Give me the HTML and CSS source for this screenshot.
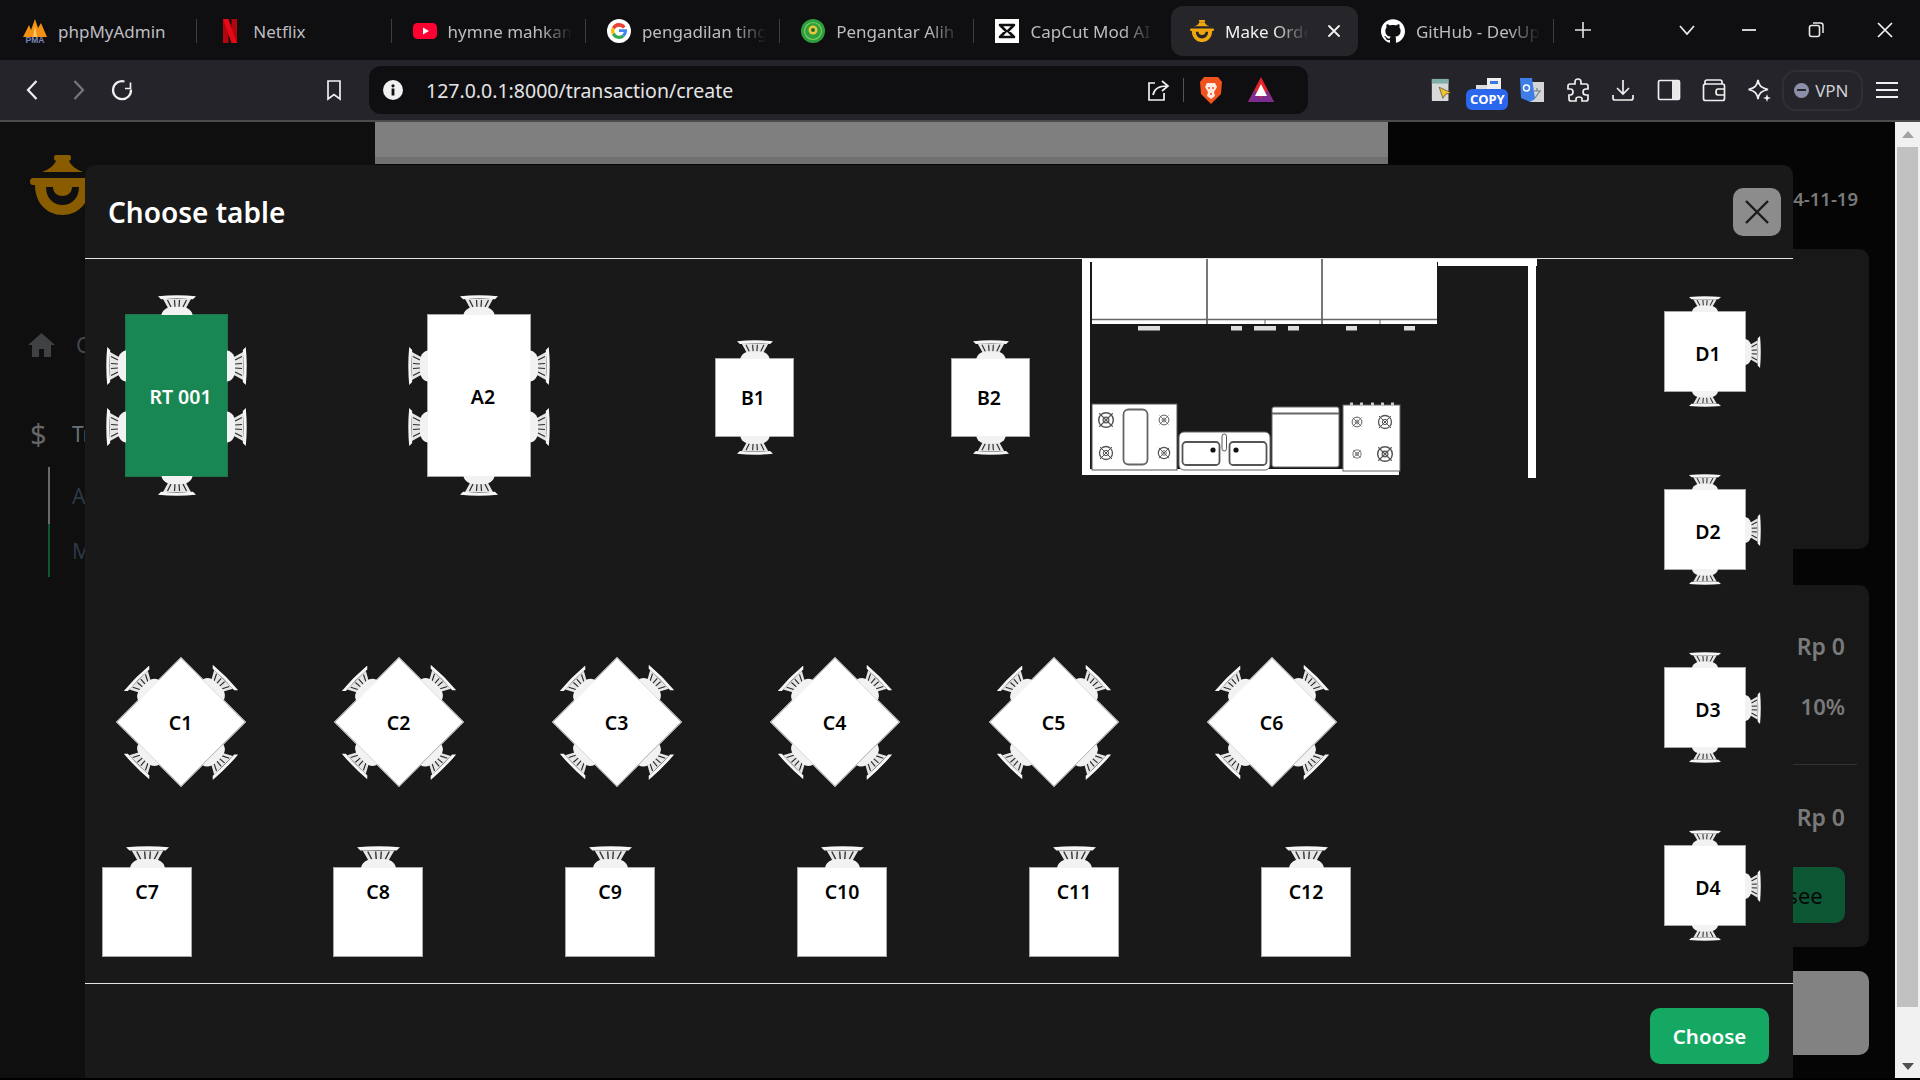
FILE: index.html
```html
<!DOCTYPE html>
<html lang="en">
<head>
<meta charset="utf-8">
<title>Make Order</title>
<link rel="stylesheet" href="styles.css">
</head>
<body>
<svg class="defs" aria-hidden="true">
  <symbol id="chair" viewBox="0 0 38 20" preserveAspectRatio="none">
    <path d="M0 1.2Q19-.6 38 1.2L35 4.2Q19 3 3 4.2Z" fill="#f6f6f6"/>
    <path d="M5 4L10 13H28L33 4Z" fill="#e6e6e6"/>
    <path d="M9.500 5L13 12M16.500 5L17 12M21.500 5L21 12M28.500 5L25 12" stroke="#2b2b2b" stroke-width="1.200"/>
    <path d="M3.500 20Q4 15 10 12.500Q19 11 28 12.500Q34 15 34.500 20Z" fill="#f2f2f2"/>
  </symbol>
  <symbol id="burner" viewBox="0 0 16 16">
    <circle cx="8" cy="8" r="6.500" fill="none" stroke="#555" stroke-width="1.300"/>
    <circle cx="8" cy="8" r="2.600" fill="none" stroke="#555"/>
    <path d="M2 2L14 14M14 2L2 14" stroke="#555" stroke-width="1"/>
  </symbol>
  <symbol id="logo" viewBox="0 0 65 60">
    <path d="M26 0H39Q41 0 41 3T38 6H27Q24 6 24 3T26 0Z" fill="currentColor"/>
    <path d="M26 6H39Q42 13 53 17H12Q23 13 26 6Z" fill="currentColor"/>
    <path d="M3 23H62Q65 23 65 26.500T62 30H60C60 48 48 60 32.500 60C17 60 5 48 5 30H3Q0 30 0 26.500T3 23Z" fill="currentColor"/>
    <path d="M16 32H23C23 44 42 44 42 32H49C49 56 16 56 16 32Z" class="logo-cut"/>
  </symbol>
</svg>

<header class="tabstrip">
  <div class="tab tab-sep tab-first">
    <svg class="favicon" viewBox="0 0 24 24"><path d="M0 18L6 6L8 11L12 0L15 9L18 4L24 18Z" fill="#f29111"/><path d="M10 18L12 6L14 18Z" fill="#ffc46b"/><text x="12" y="24" class="pma">PMA</text></svg>
    <span class="tab-title">phpMyAdmin</span>
  </div>
  <div class="tab tab-sep">
    <svg class="favicon" viewBox="0 0 24 24"><path d="M5 0H10.500V24L5 24Z" fill="#b1060f"/><path d="M13.500 0H19V24H13.500Z" fill="#b1060f"/><path d="M5 0H10.500L19 24H13.500Z" fill="#e50914"/></svg>
    <span class="tab-title">Netflix</span>
  </div>
  <div class="tab tab-sep">
    <svg class="favicon" viewBox="0 0 24 24"><rect y="4" width="24" height="16" rx="4.500" fill="#ff0033"/><path d="M10 8.500L16 12L10 15.500Z" fill="#fff"/></svg>
    <span class="tab-title fade">hymne mahkamah agung</span>
  </div>
  <div class="tab tab-sep">
    <svg class="favicon" viewBox="0 0 24 24"><circle cx="12" cy="12" r="12" fill="#fff"/><path d="M18.500 7.400A8 8 0 0 0 5 8.200L7.700 10.300A5 5 0 0 1 16 9.600Z" fill="#ea4335"/><path d="M5 8.200A8 8 0 0 0 5 15.800L7.700 13.700A5 5 0 0 1 7.700 10.300Z" fill="#fbbc05"/><path d="M5 15.800A8 8 0 0 0 17.500 17.800L15 15.800A5 5 0 0 1 7.700 13.700Z" fill="#34a853"/><path d="M12 10.300H20V12A8 8 0 0 1 17.500 17.800L15 15.800A5 5 0 0 0 16.800 13H12Z" fill="#4285f4"/></svg>
    <span class="tab-title fade">pengadilan tinggi agama</span>
  </div>
  <div class="tab tab-sep">
    <svg class="favicon" viewBox="0 0 24 24"><circle cx="12" cy="12" r="12" fill="#2f9e3f"/><circle cx="12" cy="12" r="8.500" fill="none" stroke="#7fcf5d" stroke-width="1.200"/><circle cx="12" cy="11" r="4.500" fill="#e7c93a"/><circle cx="12" cy="11" r="2" fill="#1f6f2e"/></svg>
    <span class="tab-title fade">Pengantar Alih Daya</span>
  </div>
  <div class="tab">
    <svg class="favicon" viewBox="0 0 24 24"><rect width="24" height="24" fill="#fff"/><path d="M5 6H19L13 12L19 18H5L11 12Z" fill="none" stroke="#111" stroke-width="2.600" stroke-linejoin="round"/></svg>
    <span class="tab-title fade">CapCut Mod AI Pro</span>
  </div>
  <div class="tab tab-active">
    <svg class="favicon logo-tab" viewBox="0 0 65 60"><use href="#logo"/></svg>
    <span class="tab-title fade-short">Make Order</span>
    <svg class="tab-close" viewBox="0 0 12 12"><path d="M1 1L11 11M11 1L1 11" stroke="#f2f2f2" stroke-width="1.800" stroke-linecap="round"/></svg>
  </div>
  <div class="tab tab-sep tab-last">
    <svg class="favicon" viewBox="0 0 24 24"><path fill="#fff" d="M12 .297c-6.630 0-12 5.373-12 12 0 5.303 3.438 9.800 8.205 11.385.6.113.82-.258.82-.577 0-.285-.01-1.040-.015-2.040-3.338.724-4.042-1.610-4.042-1.610C4.422 18.070 3.633 17.700 3.633 17.700c-1.087-.744.084-.729.084-.729 1.205.084 1.838 1.236 1.838 1.236 1.070 1.835 2.809 1.305 3.495.998.108-.776.417-1.305.76-1.605-2.665-.3-5.466-1.332-5.466-5.930 0-1.310.465-2.380 1.235-3.220-.135-.303-.54-1.523.105-3.176 0 0 1.005-.322 3.300 1.230.96-.267 1.980-.399 3-.405 1.020.006 2.040.138 3 .405 2.280-1.552 3.285-1.230 3.285-1.230.645 1.653.24 2.873.12 3.176.765.84 1.230 1.910 1.230 3.220 0 4.610-2.805 5.625-5.475 5.920.42.36.81 1.096.81 2.220 0 1.606-.015 2.896-.015 3.286 0 .315.21.69.825.57C20.565 22.092 24 17.592 24 12.297c0-6.627-5.373-12-12-12"/></svg>
    <span class="tab-title fade">GitHub - DevUp Team</span>
  </div>
  <svg class="win-icon win-plus" viewBox="0 0 18 18"><path d="M9 1V17M1 9H17" stroke="#e4e4e4" stroke-width="1.600"/></svg>
  <svg class="win-icon win-chevron" viewBox="0 0 16 10"><path d="M1 1L8 9L15 1" fill="none" stroke="#e8e8e8" stroke-width="1.800"/></svg>
  <svg class="win-icon win-min" viewBox="0 0 16 16"><path d="M1 8H15" stroke="#e8e8e8" stroke-width="1.800"/></svg>
  <svg class="win-icon win-restore" viewBox="0 0 16 16"><rect x="1.500" y="3.500" width="10" height="11" rx="2" fill="none" stroke="#e8e8e8" stroke-width="1.600"/><path d="M5 1H12.500Q15 1 15 3.500V11" fill="none" stroke="#e8e8e8" stroke-width="1.500"/></svg>
  <svg class="win-icon win-close" viewBox="0 0 16 16"><path d="M1 1L15 15M15 1L1 15" stroke="#f2f2f2" stroke-width="1.700"/></svg>
</header>

<nav class="toolbar">
  <div class="slot"><svg class="ic" viewBox="0 0 24 24"><path d="M15.500 3L7 12L15.500 21" class="st"/></svg></div>
  <div class="slot"><svg class="ic" viewBox="0 0 24 24"><path d="M8.500 3L17 12L8.500 21" class="st dim"/></svg></div>
  <div class="slot"><svg class="ic" viewBox="0 0 24 24"><path d="M14.500 3.500A9 9 0 1 0 21 11.500" class="st"/><path d="M20.500 4.500V10.500H15" class="st thin"/></svg></div>
  <div class="slot slot-bookmark"><svg class="ic" viewBox="0 0 24 24"><path d="M6 3H18V21L12 16.500L6 21Z" class="st thin"/></svg></div>
  <div class="urlbar">
    <svg class="info" viewBox="0 0 20 20"><circle cx="10" cy="10" r="10" fill="#f1f1f1"/><rect x="8.600" y="8.500" width="2.800" height="7" fill="#111"/><circle cx="10" cy="5.800" r="1.600" fill="#111"/></svg>
    <span class="url">127.0.0.1:8000/transaction/create</span>
    <svg class="ic url-share" viewBox="0 0 24 24"><path d="M9 5H3V22H18V15" class="st thin"/><path d="M7 17C8 11 12 8 21 8M16 3L22 8L16 13" class="st thin"/></svg>
    <span class="url-sep"></span>
    <svg class="brave" viewBox="0 0 24 28"><path d="M5 1H19L23 6L22 18L12 28L2 18L1 6Z" fill="#f1521e"/><path d="M8 7H16L18 11L15 16L16 20L12 23L8 20L9 16L6 11Z" fill="#fff" opacity=".88"/><path d="M9 12H11M13 12H15M11 18H13" stroke="#f1521e" stroke-width="1.500"/></svg>
    <svg class="bat" viewBox="0 0 28 28"><path d="M14 1L27 26H1Z" fill="#e5232c"/><path d="M7.500 14L1 26H27L20.500 14L14 22Z" fill="#7d2d8f"/><path d="M14 8L20 20H8Z" fill="#fff"/></svg>
  </div>
  <div class="slot ext ext-first"><svg class="ic" viewBox="0 0 26 26"><rect x="2" y="1" width="18" height="24" rx="1" fill="#d8d8d8"/><rect x="2" y="1" width="18" height="5" fill="#7fb0a8"/><path d="M10 10L23 16L17 17.500L14 22Z" fill="#f2c230" stroke="#222" stroke-width=".6"/></svg></div>
  <div class="slot ext copy-ext">
    <svg class="copy-art" viewBox="0 0 42 14"><rect x="10" y="8" width="12" height="6" fill="#ddd"/><rect x="21" y="1" width="14" height="13" fill="#eee"/><rect x="24" y="4" width="8" height="3" fill="#3a78e0"/></svg>
    <span class="copy-badge">COPY</span>
  </div>
  <div class="slot ext"><svg class="ic" viewBox="0 0 24 24"><rect x="10" y="4" width="14" height="20" fill="#d5d5d5"/><path d="M0 0H12L15 21L10 24L1 20Z" fill="#3f7ee8"/><circle cx="6.500" cy="10" r="3" fill="none" stroke="#fff" stroke-width="1.400"/><path d="M17 10V13M14 13H21M15 20L20 13" stroke="#6f7f88" stroke-width="1.200" fill="none"/></svg></div>
  <div class="slot ext"><svg class="ic" viewBox="0 0 24 24"><path d="M9 4Q9 1 12 1T15 4V6H20Q22 6 22 8V11H20Q17 11 17 14T20 17H22V21Q22 23 20 23H16V21Q16 19 13 19T10 21V23H5Q3 23 3 21V17H4.500Q7 17 7 14T4.500 11H2V8Q2 6 4 6H9Z" class="st thin"/></svg></div>
  <div class="slot ext"><svg class="ic" viewBox="0 0 24 24"><path d="M12 2V15M6 10L12 16L18 10" class="st thin"/><path d="M2 17V20Q2 22 4 22H20Q22 22 22 20V17" class="st thin"/></svg></div>
  <div class="slot ext"><svg class="ic" viewBox="0 0 24 24"><rect x="1.500" y="2.500" width="21" height="19" rx="1.500" class="st thin"/><rect x="15" y="3" width="7" height="18" fill="#e8e8e8"/></svg></div>
  <div class="slot ext"><svg class="ic" viewBox="0 0 24 24"><path d="M3 7V4Q3 2 5 2H18Q20 2 20 4V6" class="st thin"/><rect x="1.500" y="6" width="21" height="16.500" rx="2" class="st thin"/><path d="M23 11H16Q14 11 14 14T16 17H23" class="st thin"/></svg></div>
  <div class="slot ext"><svg class="ic" viewBox="0 0 24 24"><path d="M11 2C12 8 14 10 21 11.500C14 13 12 15 11 21C10 15 8 13 1.500 11.500C8 10 10 8 11 2Z" class="st thin"/><path d="M20 16L21 19L24 20L21 21L20 24L19 21L16 20L19 19Z" fill="#eee"/></svg></div>
  <div class="vpn"><span class="vpn-dot"></span><span>VPN</span></div>
  <svg class="menu" viewBox="0 0 22 16"><path d="M0 1H22M0 8H22M0 15H22" stroke="#f0f0f0" stroke-width="2"/></svg>
</nav>

<div class="viewport">
  <aside class="sidebar">
    <svg class="side-logo" viewBox="0 0 65 60"><use href="#logo"/></svg>
    <div class="side-item side-home">
      <svg class="home-icon" viewBox="0 0 27 24"><path d="M13.500 0L27 12H23V24H16V16H11V24H4V12H0Z" fill="#3f4145"/></svg>
      <span class="side-label">Cashier</span>
    </div>
    <div class="side-item side-trans">
      <span class="dollar">$</span>
      <span class="side-label trans-label">Transaction</span>
    </div>
    <div class="sub-item sub-gray"><span>All</span></div>
    <div class="sub-item sub-green"><span>Make</span></div>
  </aside>

  <main class="main">
    <div class="topbar"></div>
    <div class="date">2024-11-19</div>
    <section class="card card-top"></section>
    <section class="card card-summary">
      <div class="sum-row">Rp 0</div>
      <div class="sum-row sum-tax">10%</div>
      <div class="sum-divider"></div>
      <div class="sum-row sum-total">Rp 0</div>
      <div class="sum-actions"><span class="pay-btn">Choosee</span></div>
    </section>
    <section class="card card-gray"></section>
  </main>

  <div class="scrollbar">
    <div class="sb-btn"><span class="arrow-up"></span></div>
    <div class="sb-thumb"></div>
    <div class="sb-rest"><span class="arrow-down"></span></div>
  </div>

  <div class="modal">
    <div class="modal-head">
      <h2 class="modal-title">Choose table</h2>
      <button class="modal-close" type="button"><svg viewBox="0 0 24 24"><path d="M1 1L23 23M23 1L1 23" stroke="#1a1a1a" stroke-width="2.400"/></svg></button>
    </div>
    <div class="floor">
      <div class="table wide at-rt selected shift-r">
        <svg class="chair n"><use href="#chair"/></svg><svg class="chair s"><use href="#chair"/></svg>
        <svg class="chair w y-a"><use href="#chair"/></svg><svg class="chair w y-b"><use href="#chair"/></svg>
        <svg class="chair e y-a"><use href="#chair"/></svg><svg class="chair e y-b"><use href="#chair"/></svg>
        <span>RT 001</span>
      </div>
      <div class="table wide at-a2 shift-r">
        <svg class="chair n"><use href="#chair"/></svg><svg class="chair s"><use href="#chair"/></svg>
        <svg class="chair w y-a"><use href="#chair"/></svg><svg class="chair w y-b"><use href="#chair"/></svg>
        <svg class="chair e y-a"><use href="#chair"/></svg><svg class="chair e y-b"><use href="#chair"/></svg>
        <span>A2</span>
      </div>
      <div class="table small at-b1"><svg class="chair n"><use href="#chair"/></svg><svg class="chair s"><use href="#chair"/></svg><span>B1</span></div>
      <div class="table small at-b2"><svg class="chair n"><use href="#chair"/></svg><svg class="chair s"><use href="#chair"/></svg><span>B2</span></div>

      <svg class="kitchen" viewBox="0 0 460 220">
        <rect width="8" height="216" fill="#fff"/>
        <rect x="8" width="348" height="3" fill="#fff"/>
        <rect x="10" width="345" height="65" fill="#fff"/>
        <path d="M125 0V65M240 0V65" stroke="#777" stroke-width="2"/>
        <path d="M10 60.500H355" stroke="#666" stroke-width="1.600"/>
        <path d="M183 60V65M298 60V65" stroke="#666"/>
        <g fill="#dcdcdc">
          <rect x="56" y="67" width="22" height="4.500"/><rect x="149" y="67" width="11" height="4.500"/><rect x="172" y="67" width="22" height="4.500"/>
          <rect x="206" y="67" width="11" height="4.500"/><rect x="264" y="67" width="11" height="4.500"/><rect x="322" y="67" width="11" height="4.500"/>
        </g>
        <rect x="356" width="99" height="7" fill="#fff"/>
        <rect x="446" width="8" height="219" fill="#fff"/>
        <rect y="210" width="317" height="6" fill="#fff"/>
        <rect x="10" y="145" width="85" height="66" fill="#fff" stroke="#555"/>
        <rect x="41.500" y="150.500" width="24" height="55" rx="5" fill="none" stroke="#666" stroke-width="1.800"/>
        <use href="#burner" x="15" y="152" width="18" height="18"/><use href="#burner" x="16" y="186" width="16" height="16"/>
        <use href="#burner" x="76" y="155" width="12" height="12"/><use href="#burner" x="75" y="187" width="14" height="14"/>
        <rect x="97" y="173" width="91" height="38" rx="5" fill="#fff" stroke="#666"/>
        <rect x="100.500" y="183" width="37" height="23" rx="3.500" fill="none" stroke="#555" stroke-width="1.800"/>
        <rect x="147.500" y="183" width="37" height="23" rx="3.500" fill="none" stroke="#555" stroke-width="1.800"/>
        <rect x="140" y="175" width="4.500" height="17" rx="2.200" fill="#fff" stroke="#555"/>
        <circle cx="131" cy="191" r="2.600" fill="#111"/><circle cx="154" cy="191" r="2.600" fill="#111"/>
        <rect x="190" y="148" width="67" height="60" rx="2" fill="#fff" stroke="#666"/>
        <path d="M190 154.500H257" stroke="#666" stroke-width="2"/>
        <rect x="261" y="146" width="57" height="66" fill="#fff" stroke="#666"/>
        <path d="M268 145h3M278 145h3M289 145h3M299 145h3M309 145h3" stroke="#ccc" stroke-width="3"/>
        <use href="#burner" x="269" y="157" width="12" height="12"/><use href="#burner" x="295" y="155" width="16" height="16"/>
        <use href="#burner" x="270" y="190" width="10" height="10"/><use href="#burner" x="294" y="186" width="18" height="18"/>
      </svg>

      <div class="table diamond at-c1"><svg class="chair n"><use href="#chair"/></svg><svg class="chair s"><use href="#chair"/></svg><svg class="chair w y-c"><use href="#chair"/></svg><svg class="chair e y-c"><use href="#chair"/></svg><span>C1</span></div>
      <div class="table diamond at-c2"><svg class="chair n"><use href="#chair"/></svg><svg class="chair s"><use href="#chair"/></svg><svg class="chair w y-c"><use href="#chair"/></svg><svg class="chair e y-c"><use href="#chair"/></svg><span>C2</span></div>
      <div class="table diamond at-c3"><svg class="chair n"><use href="#chair"/></svg><svg class="chair s"><use href="#chair"/></svg><svg class="chair w y-c"><use href="#chair"/></svg><svg class="chair e y-c"><use href="#chair"/></svg><span>C3</span></div>
      <div class="table diamond at-c4"><svg class="chair n"><use href="#chair"/></svg><svg class="chair s"><use href="#chair"/></svg><svg class="chair w y-c"><use href="#chair"/></svg><svg class="chair e y-c"><use href="#chair"/></svg><span>C4</span></div>
      <div class="table diamond at-c5"><svg class="chair n"><use href="#chair"/></svg><svg class="chair s"><use href="#chair"/></svg><svg class="chair w y-c"><use href="#chair"/></svg><svg class="chair e y-c"><use href="#chair"/></svg><span>C5</span></div>
      <div class="table diamond at-c6"><svg class="chair n"><use href="#chair"/></svg><svg class="chair s"><use href="#chair"/></svg><svg class="chair w y-c"><use href="#chair"/></svg><svg class="chair e y-c"><use href="#chair"/></svg><span>C6</span></div>

      <div class="table booth at-c7"><svg class="chair n"><use href="#chair"/></svg><span>C7</span></div>
      <div class="table booth at-c8"><svg class="chair n"><use href="#chair"/></svg><span>C8</span></div>
      <div class="table booth at-c9"><svg class="chair n"><use href="#chair"/></svg><span>C9</span></div>
      <div class="table booth at-c10"><svg class="chair n"><use href="#chair"/></svg><span>C10</span></div>
      <div class="table booth at-c11"><svg class="chair n"><use href="#chair"/></svg><span>C11</span></div>
      <div class="table booth at-c12"><svg class="chair n"><use href="#chair"/></svg><span>C12</span></div>

      <div class="table side at-d1"><svg class="chair n"><use href="#chair"/></svg><svg class="chair s"><use href="#chair"/></svg><svg class="chair e y-c"><use href="#chair"/></svg><span>D1</span></div>
      <div class="table side at-d2"><svg class="chair n"><use href="#chair"/></svg><svg class="chair s"><use href="#chair"/></svg><svg class="chair e y-c"><use href="#chair"/></svg><span>D2</span></div>
      <div class="table side at-d3"><svg class="chair n"><use href="#chair"/></svg><svg class="chair s"><use href="#chair"/></svg><svg class="chair e y-c"><use href="#chair"/></svg><span>D3</span></div>
      <div class="table side at-d4"><svg class="chair n"><use href="#chair"/></svg><svg class="chair s"><use href="#chair"/></svg><svg class="chair e y-c"><use href="#chair"/></svg><span>D4</span></div>
    </div>
    <div class="modal-foot"><button class="choose-btn" type="button">Choose</button></div>
  </div>
</div>
</body>
</html>
```
FILE: styles.css
```css
* { box-sizing: border-box; }
html, body { margin: 0; padding: 0; }
body {
  width: 1920px;
  height: 1080px;
  overflow: hidden;
  background: #000;
  font-family: "Noto Sans", "Open Sans", sans-serif;
  display: flex;
  flex-direction: column;
}
.defs { position: absolute; width: 0; height: 0; }
.logo-cut { fill: var(--cut, #0f0f0f); }

/* tab strip */
.tabstrip {
  height: 60px;
  flex: none;
  background: #0f0f11;
  display: flex;
  align-items: center;
  padding-left: 3px;
}
.tab {
  position: relative;
  flex: none;
  width: 194.300px;
  height: 50px;
  margin-top: 2px;
  padding-left: 21px;
  display: flex;
  align-items: center;
  gap: 11px;
  color: #bdbdc0;
  font-size: 17px;
}
.tab-first { padding-left: 20px; }
.tab-sep::after {
  content: "";
  position: absolute;
  right: 0;
  top: 13px;
  height: 24px;
  width: 1px;
  background: #3d3d42;
}
.tab-active {
  width: 187px;
  margin-left: 2.200px;
  padding-left: 19px;
  border-radius: 12px;
  background: #25252a;
  color: #f2f2f2;
  --cut: #25252a;
}
.tab-last { width: 196px; padding-left: 23px; }
.favicon { width: 24px; height: 24px; flex: none; }
.logo-tab { color: #f0a60e; }
.pma { font: 700 8.500px "Liberation Sans", sans-serif; fill: #7c83b4; text-anchor: middle; }
.tab-title { white-space: nowrap; overflow: hidden; }
.fade {
  width: 124px;
  -webkit-mask-image: linear-gradient(90deg, #000 75%, transparent 100%);
  mask-image: linear-gradient(90deg, #000 75%, transparent 100%);
}
.fade-short {
  width: 88px;
  -webkit-mask-image: linear-gradient(90deg, #000 55%, transparent 95%);
  mask-image: linear-gradient(90deg, #000 55%, transparent 95%);
}
.tab-close { width: 12px; height: 12px; margin-left: 4px; flex: none; }
.win-icon { flex: none; margin-top: 0; }
.win-plus { width: 18px; height: 18px; margin-left: 20px; }
.win-chevron { width: 16px; height: 10px; margin-left: 87px; }
.win-min { width: 16px; height: 16px; margin-left: 46px; }
.win-restore { width: 16px; height: 18px; margin-left: 51px; }
.win-close { width: 16px; height: 18px; margin-left: 53px; }

/* toolbar */
.toolbar {
  height: 62px;
  flex: none;
  background: #24242a;
  border-bottom: 2px solid #4c4c4e;
  display: flex;
  align-items: center;
  padding-left: 11px;
}
.slot {
  width: 44.500px;
  flex: none;
  display: flex;
  justify-content: center;
  align-items: center;
  height: 40px;
}
.slot-bookmark { margin-left: 167px; }
.ic { width: 24px; height: 24px; display: block; }
.st { fill: none; stroke: #efefef; stroke-width: 2.200; }
.st.thin { stroke-width: 1.700; }
.st.dim { stroke: #77777b; }
.urlbar {
  width: 939px;
  height: 48px;
  margin-left: 13px;
  flex: none;
  background: #0f0f11;
  border-radius: 12px;
  display: flex;
  align-items: center;
  padding-left: 14px;
}
.info { width: 20px; height: 20px; flex: none; }
.url { margin-left: 23px; width: 631px; font-size: 19.500px; color: #e4e4e6; white-space: nowrap; }
.url-share { width: 24px; height: 24px; margin-left: 89px; flex: none; }
.url-sep { width: 1px; height: 24px; background: #55555a; margin-left: 13px; flex: none; }
.brave { width: 24px; height: 28px; margin-left: 15px; flex: none; }
.bat { width: 28px; height: 28px; margin-left: 24px; flex: none; }
.ext { width: 45.400px; position: relative; }
.ext-first { margin-left: 111px; }
.copy-ext { flex-direction: column; justify-content: flex-start; height: 34px; margin-top: 8px; }
.copy-art { width: 42px; height: 14px; display: block; }
.copy-badge {
  position: absolute;
  top: 12px;
  left: 2px;
  width: 42px;
  height: 21px;
  border-radius: 6px;
  background: #2a66ee;
  color: #fff;
  font-size: 13px;
  font-weight: 700;
  line-height: 21px;
  text-align: center;
}
.vpn {
  width: 81px;
  height: 41px;
  flex: none;
  border: 2px solid #2f2f35;
  border-radius: 14px;
  display: flex;
  align-items: center;
  padding-left: 10px;
  gap: 6px;
  color: #cfcfd2;
  font-size: 17px;
}
.vpn-dot {
  position: relative;
  width: 15px;
  height: 15px;
  border-radius: 50%;
  background: #8b90a8;
  flex: none;
}
.vpn-dot::after {
  content: "";
  position: absolute;
  left: 3px;
  right: 3px;
  top: 6.500px;
  height: 2px;
  background: #26262b;
}
.menu { width: 22px; height: 16px; margin-left: 13px; flex: none; }

/* page behind the dialog */
.viewport {
  position: relative;
  height: 956px;
  flex: none;
  display: flex;
}
.sidebar {
  width: 375px;
  flex: none;
  background: #0f0f0f;
  padding-top: 33px;
  overflow: hidden;
}
.side-logo { display: block; width: 65px; height: 60px; margin-left: 30px; color: #8a5c00; }
.side-item { display: flex; align-items: center; color: #44484e; font-size: 21px; }
.side-home { margin: 118px 0 0 28px; height: 24px; }
.home-icon { width: 27px; height: 24px; flex: none; }
.side-label { margin-left: 21px; }
.side-trans { margin: 66px 0 0 30px; height: 22px; }
.dollar { width: 15px; font-size: 29px; color: #666; font-weight: 400; line-height: 22px; }
.trans-label { margin-left: 27px; color: #66737d; }
.sub-item {
  margin-left: 48px;
  padding-left: 22px;
  border-left: 2px solid #6b6b6b;
  color: #2c3845;
  font-size: 21px;
  display: flex;
  align-items: center;
}
.sub-gray { margin-top: 22px; height: 57px; }
.sub-green { height: 53px; border-left-color: #0d5634; }
.main {
  width: 1520px;
  flex: none;
  background: #050505;
  display: flex;
  flex-direction: column;
  align-items: flex-end;
  padding-right: 26px;
}
.topbar {
  width: 1013px;
  height: 42px;
  flex: none;
  margin-right: 481px;
  background: #7f7f7f;
  border-bottom: 7px solid #707070;
}
.date {
  margin-top: 20px;
  height: 29px;
  margin-right: 11px;
  font-size: 18.500px;
  font-weight: 600;
  line-height: 29px;
  color: #797979;
  flex: none;
}
.card { width: 400px; border-radius: 10px; background: #181818; flex: none; }
.card-top { height: 300px; margin-top: 36px; }
.card-summary {
  height: 362px;
  margin-top: 36px;
  padding: 46px 24px 0 0;
  color: #7a7a7a;
  font-size: 23px;
  font-weight: 600;
}
.sum-row { height: 30px; line-height: 30px; text-align: right; }
.sum-tax { margin-top: 30px; font-size: 22px; }
.sum-divider { height: 1px; margin: 43px -12px 0 0; background: #333; }
.sum-total { margin-top: 37px; }
.sum-actions { margin-top: 35px; display: flex; justify-content: flex-end; }
.pay-btn {
  width: 134px;
  height: 56px;
  border-radius: 10px;
  background: #0d5634;
  color: #060606;
  font-size: 22px;
  font-weight: 400;
  line-height: 56px;
  text-align: center;
}
.card-gray { height: 84px; margin-top: 24px; background: #828282; }
.scrollbar {
  width: 25px;
  flex: none;
  background: #f1f1f1;
  display: flex;
  flex-direction: column;
}
.sb-btn { height: 25px; display: flex; justify-content: center; align-items: center; flex: none; }
.arrow-up { border: 6px solid transparent; border-top: 0; border-bottom: 7px solid #a3a3a3; }
.sb-thumb { margin: 0 2px; height: 860px; background: #c1c1c1; flex: none; }
.sb-rest { flex: 1; display: flex; justify-content: center; align-items: flex-end; padding-bottom: 8px; }
.arrow-down { border: 6px solid transparent; border-bottom: 0; border-top: 7px solid #505050; }

/* dialog */
.modal {
  position: absolute;
  left: 85px;
  top: 43px;
  width: 1708px;
  height: 913px;
  background: #191919;
  border-radius: 10px 10px 0 0;
  display: flex;
  flex-direction: column;
}
.modal-head {
  height: 94px;
  flex: none;
  display: flex;
  justify-content: space-between;
  align-items: flex-start;
  padding: 23px 12px 0 23px;
  border-bottom: 1px solid #e4e4e4;
}
.modal-title { margin: 0; font-size: 28px; font-weight: 600; line-height: 48px; color: #fff; }
.modal-close {
  width: 48px;
  height: 48px;
  padding: 12px;
  border: 0;
  border-radius: 10px;
  background: #8c8c8c;
}
.modal-close svg { display: block; width: 24px; height: 24px; }
.floor { position: relative; height: 724px; flex: none; }
.modal-foot {
  flex: 1;
  border-top: 1px solid #e4e4e4;
  padding: 24px 24px 0 0;
  display: flex;
  justify-content: flex-end;
  align-items: flex-start;
}
.choose-btn {
  width: 119px;
  height: 56px;
  border: 0;
  border-radius: 10px;
  background: #14a863;
  color: #fff;
  font: 600 20.500px "Noto Sans", sans-serif;
}

/* floor plan */
.table {
  position: absolute;
  display: flex;
  align-items: center;
  justify-content: center;
  background: #fff;
  border: 1px solid #a8a8a8;
  color: #000;
  font-size: 19.500px;
  font-weight: 600;
  --cw: 38px;
  --ch: 20px;
}
.chair { position: absolute; width: var(--cw); height: var(--ch); display: block; overflow: visible; }
.chair.n { left: calc(50% - var(--cw) / 2); bottom: 100%; }
.chair.s { left: calc(50% - var(--cw) / 2); top: 100%; transform: rotate(180deg); }
.chair.w { left: calc((var(--ch) + var(--cw)) / -2); top: calc(var(--y) - var(--ch) / 2); transform: rotate(-90deg); }
.chair.e { left: calc(100% + (var(--ch) - var(--cw)) / 2); top: calc(var(--y) - var(--ch) / 2); transform: rotate(90deg); }
.y-a { --y: 50.500px; }
.y-b { --y: 111.500px; }
.y-c { --y: 50%; }

.wide { width: 103px; height: 163px; padding-top: 2px; }
.small { width: 79px; height: 79px; top: 99px; --cw: 36px; --ch: 19px; padding-right: 3px; }
.diamond { width: 92px; height: 92px; top: 417px; transform: rotate(45deg); --cw: 36px; --ch: 19px; }
.diamond span { transform: rotate(-45deg); }
.booth { width: 90px; height: 90px; top: 608px; --cw: 43px; --ch: 22px; align-items: flex-start; padding-top: 10px; }
.side { width: 82px; height: 81px; left: 1579px; --cw: 32px; --ch: 16px; padding: 3px 0 0 6px; }
.shift-r { padding-left: 8px; }
.selected { background: #198754; border-color: #23734d; color: #fff; }

.at-rt { left: 40px; top: 55px; }
.at-a2 { left: 342px; top: 55px; width: 104px; }
.at-b1 { left: 630px; }
.at-b2 { left: 866px; }
.at-c1 { left: 50px; }
.at-c2 { left: 268px; }
.at-c3 { left: 486px; }
.at-c4 { left: 704px; }
.at-c5 { left: 923px; }
.at-c6 { left: 1141px; }
.at-c7 { left: 17px; }
.at-c8 { left: 248px; }
.at-c9 { left: 480px; }
.at-c10 { left: 712px; }
.at-c11 { left: 944px; }
.at-c12 { left: 1176px; }
.at-d1 { top: 52px; }
.at-d2 { top: 230px; }
.at-d3 { top: 408px; }
.at-d4 { top: 586px; }
.kitchen { position: absolute; left: 997px; top: 0; width: 460px; height: 220px; }
```
